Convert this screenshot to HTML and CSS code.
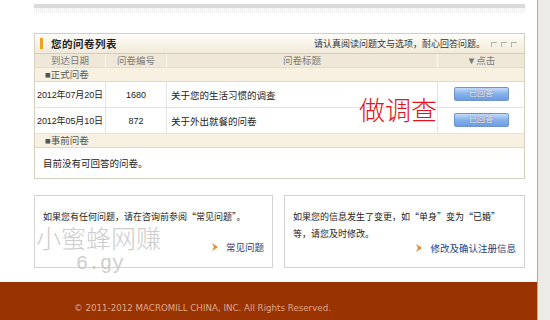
FILE: index.html
```html
<!DOCTYPE html>
<html lang="zh-CN">
<head>
    <meta charset="UTF-8">
    <title>您的问卷列表</title>
    <link rel="stylesheet" href="styles.css">
</head>
<body>
    <div class="page">
        <div class="main">
            <div class="top-bar"></div>
            <div class="top-shade"></div>

            <div class="survey-box">
                <div class="box-head">
                    <span class="mark"></span>
                    <h2>您的问卷列表</h2>
                    <p class="tip">请认真阅读问题文与选项，耐心回答问题。</p>
                    <span class="win-icons"><i></i><i></i><i></i></span>
                </div>
                <table class="survey-table">
                    <colgroup>
                        <col class="c-date">
                        <col class="c-no">
                        <col class="c-title">
                        <col class="c-act">
                    </colgroup>
                    <thead>
                        <tr>
                            <th>到达日期</th>
                            <th>问卷编号</th>
                            <th>问卷标题</th>
                            <th>▼点击</th>
                        </tr>
                    </thead>
                    <tbody>
                        <tr class="section"><td colspan="4">■正式问卷</td></tr>
                        <tr class="item">
                            <td class="date">2012年07月20日</td>
                            <td class="num">1680</td>
                            <td class="name">关于您的生活习惯的调查</td>
                            <td class="act"><span class="btn">已回答</span></td>
                        </tr>
                        <tr class="item">
                            <td class="date">2012年05月10日</td>
                            <td class="num">872</td>
                            <td class="name">关于外出就餐的问卷</td>
                            <td class="act"><span class="btn">已回答</span></td>
                        </tr>
                        <tr class="section"><td colspan="4">■事前问卷</td></tr>
                        <tr class="empty"><td colspan="4">目前没有可回答的问卷。</td></tr>
                    </tbody>
                </table>
                <div class="stamp">做调查</div>
            </div>

            <div class="info-row">
                <div class="info-box left">
                    <p>如果您有任何问题，请在咨询前参阅“常见问题”。</p>
                    <a class="more" href="#">
                        <svg width="6" height="8" viewBox="0 0 6 8"><path d="M0 0 L6 4 L0 8 L2 4 Z" fill="#e08b2c"/></svg>
                        常见问题
                    </a>
                </div>
                <div class="info-box right">
                    <p>如果您的信息发生了变更，如“单身”变为“已婚”等，请您及时修改。</p>
                    <a class="more" href="#">
                        <svg width="6" height="8" viewBox="0 0 6 8"><path d="M0 0 L6 4 L0 8 L2 4 Z" fill="#e08b2c"/></svg>
                        修改及确认注册信息
                    </a>
                </div>
            </div>
        </div>

        <div class="footer">© 2011-2012 MACROMILL CHINA, INC. All Rights Reserved.</div>

        <div class="watermark">小蜜蜂网赚<span>6.gy</span></div>
    </div>
</body>
</html>
```

FILE: styles.css
```css
* {
    margin: 0;
    padding: 0;
    box-sizing: border-box;
}

body {
    background-color: #ecebe8;
    font-family: "Liberation Sans", "Noto Sans CJK SC", sans-serif;
    font-size: 9.5px;
    color: #222;
}

.page {
    position: relative;
    width: 538px;
    height: 320px;
    background-color: #fff;
    border-right: 1px solid #a9a9a9;
    display: flex;
    flex-direction: column;
    overflow: hidden;
}

.main {
    flex: 1;
    padding-left: 34px;
    width: 525px;
}

/* 상단 회색 띠 */
.top-bar {
    margin-top: 4px;
    height: 4px;
    background-color: #dadada;
}

.top-shade {
    height: 5px;
    background: repeating-linear-gradient(90deg, #f3f3f3 0 1px, #fafafa 1px 2px);
}

/* 问卷列表 */
.survey-box {
    position: relative;
    margin-top: 20px;
    border: 1px solid #d6cebf;
}

.box-head {
    height: 20px;
    display: flex;
    align-items: center;
    background: linear-gradient(#fefdf9, #f1ead9);
    border-bottom: 1px solid #d8cdb4;
    padding-left: 5px;
}

.box-head .mark {
    width: 3px;
    height: 11px;
    background-color: #f0a020;
}

.box-head h2 {
    font-size: 10.5px;
    font-weight: bold;
    letter-spacing: 0.5px;
    color: #222;
    margin-left: 8px;
}

.box-head .tip {
    margin-left: auto;
    font-family: "Noto Sans CJK SC", sans-serif;
    font-size: 9px;
    color: #333;
}

.win-icons {
    display: flex;
    gap: 4px;
    margin: 2px 7px 0 6px;
}

.win-icons i {
    width: 6px;
    height: 5px;
    border-top: 1px solid #b8b0a0;
    border-left: 1px solid #b8b0a0;
}

.survey-table {
    width: 100%;
    border-collapse: separate;
    border-spacing: 0;
    table-layout: fixed;
}

.c-date { width: 71px; }
.c-no { width: 61px; }
.c-title { width: 271px; }
.c-act { width: 86px; }

.survey-table th {
    height: 14px;
    font-weight: normal;
    color: #7a7a7a;
    background-color: #efe8d8;
    border-right: 1px solid #faf6ee;
    border-bottom: 1px solid #e4dccb;
    line-height: 12px;
}

.survey-table th:last-child {
    border-right: none;
}

.survey-table .section td {
    height: 14px;
    background-color: #f8f1e2;
    color: #555;
    padding-left: 10px;
    border-bottom: 1px solid #e2d9c6;
    line-height: 12px;
}

.survey-table .item td {
    height: 26px;
    border-bottom: 1px solid #e3e3e3;
    border-right: 1px solid #e3e3e3;
    color: #222;
    white-space: nowrap;
}

.survey-table .item td:last-child {
    border-right: none;
}

.survey-table .date {
    font-size: 9px;
    padding-left: 2px;
    letter-spacing: -0.1px;
}

.survey-table .num {
    font-size: 9px;
    text-align: center;
}

.survey-table .name {
    padding-left: 4px;
}

.survey-table .act {
    text-align: center;
    vertical-align: top;
    padding-top: 5px;
}

.btn {
    display: inline-block;
    width: 55px;
    height: 14px;
    line-height: 12px;
    font-size: 8px;
    color: #fff;
    text-align: center;
    background: linear-gradient(#c3dbf8, #86b0ea 50%, #6d9ce2);
    border: 1px solid #6f94c9;
    border-radius: 2px;
    text-shadow: 0 0 1px #2d4f80;
}

.survey-table .empty td {
    height: 30px;
    padding-left: 8px;
    color: #222;
}

.stamp {
    position: absolute;
    left: 324px;
    top: 60px;
    font-family: "Noto Sans CJK SC", sans-serif;
    font-weight: 300;
    font-size: 26px;
    line-height: 30px;
    color: #e5131b;
}

/* 하단 안내 박스 */
.info-row {
    display: flex;
    gap: 11px;
    margin-top: 16px;
}

.info-box {
    height: 73px;
    border: 1px solid #d3d3d3;
    display: flex;
    flex-direction: column;
    justify-content: space-between;
    padding: 12px 8px 14px 8px;
    color: #222;
    font-family: "Noto Sans CJK SC", sans-serif;
    font-size: 9px;
}

.info-box.left {
    width: 239px;
}

.info-box.right {
    flex: 1;
}

.info-box p {
    line-height: 17px;
}

.info-box .more {
    align-self: flex-end;
    display: flex;
    align-items: center;
    gap: 8px;
    line-height: 12px;
    font-size: 9.5px;
    color: #1d3d7a;
    text-decoration: none;
}

.footer {
    height: 38px;
    background-color: #993300;
    color: #dfa98b;
    font-family: "DejaVu Sans", sans-serif;
    font-size: 8.7px;
    padding: 21px 0 0 74px;
}

.watermark {
    position: absolute;
    left: 36px;
    top: 222px;
    font-family: "Noto Sans CJK SC", sans-serif;
    font-weight: 300;
    font-size: 25px;
    line-height: 30px;
    color: #cdcdcd;
}

.watermark span {
    display: block;
    margin-left: 40px;
    font-family: "Liberation Mono", monospace;
    font-size: 20px;
    line-height: 24px;
}
```
